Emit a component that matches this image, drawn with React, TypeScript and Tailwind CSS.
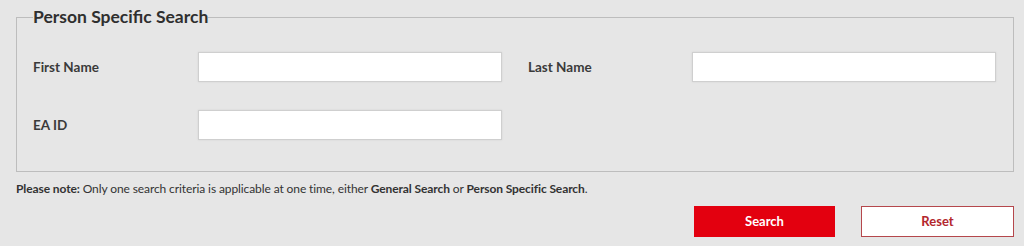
const Field = ({ label }: { label: string }) => (
  <>
    <label className="flex items-center text-[13.5px] font-bold text-[#3a3a3a]">{label}</label>
    <input
      type="text"
      className="h-[30px] w-[304px] border border-[#cfcfcf] bg-white px-2 text-[13px] shadow-[0_0_2px_rgba(0,0,0,0.08)] outline-none"
    />
  </>
);

export default function App() {
  return (
    <div className="h-[246px] w-[1024px] bg-[#e6e6e6] pl-4 pr-[10px] pt-[6px] font-['Lato','Liberation_Sans',sans-serif] text-[#333]">
      <fieldset className="m-0 h-[166px] w-[998px] border border-[#bdbdbd] px-4 pb-0 pt-0">
        <legend className="px-0 text-[17.5px] font-bold leading-[22px] text-[#2f2f2f]">Person Specific Search</legend>
        <div className="mt-[24px] grid grid-cols-[165px_305px_189px_304px] gap-y-[28px] [&>*:nth-child(3)]:pl-[25px]">
          <Field label="First Name" />
          <Field label="Last Name" />
          <Field label="EA ID" />
        </div>
      </fieldset>
      <p className="mt-[10px] text-[12px] leading-[14px] tracking-[-0.1px] text-[#333]">
        <span className="font-bold">Please note:</span> Only one search criteria is applicable at one time, either{" "}
        <span className="font-bold">General Search</span> or <span className="font-bold">Person Specific Search</span>.
      </p>
      <div className="mt-[10px] flex justify-end gap-[26px] pr-0">
        <button className="h-[31px] w-[141px] bg-[#e3000f] text-[13px] font-bold text-white">Search</button>
        <button className="h-[31px] w-[153px] border border-[#b5474c] bg-white text-[13px] font-bold text-[#b3262d]">
          Reset
        </button>
      </div>
    </div>
  );
}
